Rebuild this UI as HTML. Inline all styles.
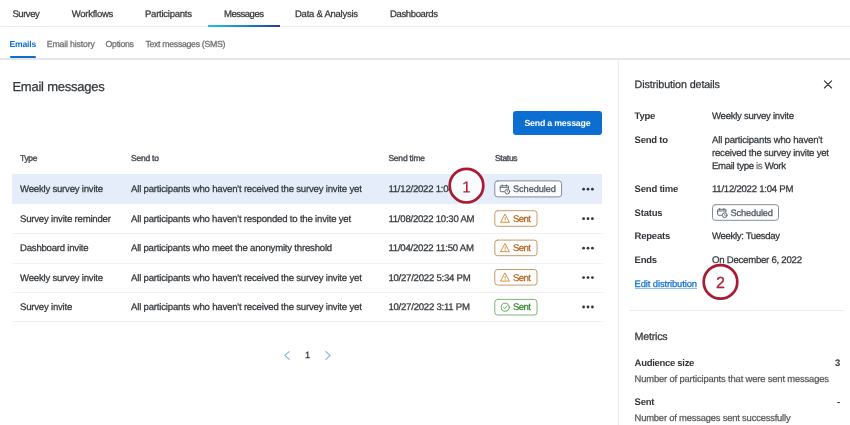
<!DOCTYPE html>
<html><head><meta charset="utf-8"><title>Email messages</title>
<style>
html,body{margin:0;padding:0;background:#fff;}
body{width:850px;height:425px;position:relative;overflow:hidden;font-family:"Liberation Sans",sans-serif;}
#app{position:absolute;left:0;top:0;width:850px;height:425px;overflow:hidden;background:#fff;will-change:transform;text-rendering:geometricPrecision;}
.t{position:absolute;white-space:pre;line-height:20px;font-family:"Liberation Sans",sans-serif;-webkit-text-stroke:0.25px currentColor;}
.b{position:absolute;box-sizing:border-box;}
svg{position:absolute;overflow:visible;}
</style></head><body><div id="app">
<div class="b" style="left:0px;top:26px;width:850px;height:1px;background:#ebebeb;"></div>
<div class="b" style="left:208px;top:25px;width:72px;height:2px;background:linear-gradient(90deg,#21c3d9 0%,#1f7fc4 55%,#2a3a9c 100%);"></div>
<div class="b" style="left:0px;top:58px;width:850px;height:1.5px;background:#e6e6e6;"></div>
<div class="b" style="left:9.6px;top:56px;width:26.6px;height:2px;background:#0b6ed0;border-radius:1px"></div>
<div class="b" style="left:618px;top:59px;width:1px;height:366px;background:#ececec;"></div>
<div class="b" style="left:513px;top:111px;width:89px;height:23.5px;background:#0b6ed0;border-radius:3px"></div>
<div class="b" style="left:12px;top:174px;width:590px;height:30px;background:#e4edf9;"></div>
<div class="b" style="left:12px;top:233px;width:591px;height:1px;background:#f1f1f1;"></div>
<div class="b" style="left:12px;top:262.5px;width:591px;height:1px;background:#f1f1f1;"></div>
<div class="b" style="left:12px;top:292px;width:591px;height:1px;background:#f1f1f1;"></div>
<div class="b" style="left:12px;top:321px;width:591px;height:1px;background:#f1f1f1;"></div>
<div class="b" style="left:634.6px;top:288px;width:62.4px;height:1.4px;background:#8fbcec;"></div>
<div class="b" style="left:628.6px;top:309.5px;width:215.4px;height:1px;background:#ebebeb;"></div>
<svg style="left:0;top:0" width="850" height="425" fill="none" stroke-linecap="round" stroke-linejoin="round">
<rect x="494.80" y="180.90" width="66.80" height="16.00" rx="2.8" fill="#fcfdfe" stroke="#838c97" stroke-width="1"/>
<rect x="494.80" y="210.70" width="42.20" height="15.60" rx="2.8" fill="#ffffff" stroke="#c99868" stroke-width="1"/>
<rect x="494.80" y="240.10" width="42.20" height="15.60" rx="2.8" fill="#ffffff" stroke="#c99868" stroke-width="1"/>
<rect x="494.80" y="269.50" width="42.20" height="15.60" rx="2.8" fill="#ffffff" stroke="#c99868" stroke-width="1"/>
<rect x="494.80" y="299.40" width="42.20" height="15.60" rx="2.8" fill="#ffffff" stroke="#7ab775" stroke-width="1"/>
<rect x="712.50" y="204.70" width="66.00" height="15.60" rx="2.8" fill="#ffffff" stroke="#838c97" stroke-width="1"/>
<g transform="translate(499.9,184.5)" stroke="#56606b" stroke-width="0.9"><path d="M4.2 7.2H1.2a.9 .9 0 0 1-.9-.9V2.1a.9 .9 0 0 1 .9-.9h6.6a.9 .9 0 0 1 .9 .9V4"/><path d="M.4 2.9h8.2"/><path d="M2.3 .4v1.4M6.6 .4v1.4"/><circle cx="7.4" cy="7.1" r="2.4"/><path d="M7.4 5.9v1.3l.8 .5" stroke-width="0.7"/></g>
<g transform="translate(717.3,208.1)" stroke="#56606b" stroke-width="0.9"><path d="M4.2 7.2H1.2a.9 .9 0 0 1-.9-.9V2.1a.9 .9 0 0 1 .9-.9h6.6a.9 .9 0 0 1 .9 .9V4"/><path d="M.4 2.9h8.2"/><path d="M2.3 .4v1.4M6.6 .4v1.4"/><circle cx="7.4" cy="7.1" r="2.4"/><path d="M7.4 5.9v1.3l.8 .5" stroke-width="0.7"/></g>
<g transform="translate(500.5,213.8)" stroke="#cf7f2c" stroke-width="0.85"><path d="M4.65 .6L8.9 8.5H.4Z"/><path d="M4.65 3.6v2.3M4.65 7.1v.1" stroke-width="0.8"/></g>
<g transform="translate(500.5,243.2)" stroke="#cf7f2c" stroke-width="0.85"><path d="M4.65 .6L8.9 8.5H.4Z"/><path d="M4.65 3.6v2.3M4.65 7.1v.1" stroke-width="0.8"/></g>
<g transform="translate(500.5,272.6)" stroke="#cf7f2c" stroke-width="0.85"><path d="M4.65 .6L8.9 8.5H.4Z"/><path d="M4.65 3.6v2.3M4.65 7.1v.1" stroke-width="0.8"/></g>
<g transform="translate(501.1,302.9)" stroke="#4a9a45" stroke-width="0.85"><circle cx="4.2" cy="4.3" r="4.05"/><path d="M2.4 4.5l1.3 1.3 2.3-2.7"/></g>
<circle cx="583.6" cy="189.2" r="1.4" fill="#32363a" stroke="none"/>
<circle cx="588.0" cy="189.2" r="1.4" fill="#32363a" stroke="none"/>
<circle cx="592.4" cy="189.2" r="1.4" fill="#32363a" stroke="none"/>
<circle cx="583.6" cy="218.7" r="1.4" fill="#32363a" stroke="none"/>
<circle cx="588.0" cy="218.7" r="1.4" fill="#32363a" stroke="none"/>
<circle cx="592.4" cy="218.7" r="1.4" fill="#32363a" stroke="none"/>
<circle cx="583.6" cy="248.2" r="1.4" fill="#32363a" stroke="none"/>
<circle cx="588.0" cy="248.2" r="1.4" fill="#32363a" stroke="none"/>
<circle cx="592.4" cy="248.2" r="1.4" fill="#32363a" stroke="none"/>
<circle cx="583.6" cy="277.6" r="1.4" fill="#32363a" stroke="none"/>
<circle cx="588.0" cy="277.6" r="1.4" fill="#32363a" stroke="none"/>
<circle cx="592.4" cy="277.6" r="1.4" fill="#32363a" stroke="none"/>
<circle cx="583.6" cy="307.0" r="1.4" fill="#32363a" stroke="none"/>
<circle cx="588.0" cy="307.0" r="1.4" fill="#32363a" stroke="none"/>
<circle cx="592.4" cy="307.0" r="1.4" fill="#32363a" stroke="none"/>
<path d="M289.2 351.6L284.8 355.4l4.4 4" stroke="#82b1e6" stroke-width="1.2"/>
<path d="M325.8 351.6l4.4 3.8-4.4 4" stroke="#82b1e6" stroke-width="1.2"/>
<path d="M824.4 80.8l7.2 7.2M831.6 80.8l-7.2 7.2" stroke="#32363a" stroke-width="1.1"/>
</svg>

<div class="t" style="left:12.4px;top:5px;font-size:9.5px;color:#32363a;letter-spacing:-0.436px;">Survey</div>
<div class="t" style="left:71.8px;top:5px;font-size:9.5px;color:#32363a;letter-spacing:-0.268px;">Workflows</div>
<div class="t" style="left:145px;top:5px;font-size:9.5px;color:#32363a;letter-spacing:-0.24px;">Participants</div>
<div class="t" style="left:224px;top:5px;font-size:9.5px;color:#32363a;letter-spacing:-0.473px;">Messages</div>
<div class="t" style="left:295px;top:5px;font-size:9.5px;color:#32363a;letter-spacing:-0.253px;">Data &amp; Analysis</div>
<div class="t" style="left:390px;top:5px;font-size:9.5px;color:#32363a;letter-spacing:-0.359px;">Dashboards</div>
<div class="t" style="left:9.6px;top:34px;font-size:8.6px;font-weight:700;-webkit-text-stroke:0;color:#0b6ed0;letter-spacing:-0.224px;">Emails</div>
<div class="t" style="left:46.8px;top:34px;font-size:8.8px;color:#6a6d70;letter-spacing:-0.197px;">Email history</div>
<div class="t" style="left:105.6px;top:34px;font-size:8.8px;color:#6a6d70;letter-spacing:-0.321px;">Options</div>
<div class="t" style="left:145.4px;top:34px;font-size:8.8px;color:#6a6d70;letter-spacing:-0.336px;">Text messages (SMS)</div>
<div class="t" style="left:12.4px;top:77px;font-size:13px;color:#32363a;letter-spacing:-0.229px;">Email messages</div>
<div class="t" style="left:524.4px;top:113px;font-size:8.8px;font-weight:700;-webkit-text-stroke:0;color:#ffffff;letter-spacing:-0.212px;">Send a message</div>
<div class="t" style="left:20px;top:148px;font-size:8.5px;-webkit-text-stroke:0.4px currentColor;color:#4b4f54;letter-spacing:-0.346px;">Type</div>
<div class="t" style="left:131px;top:148px;font-size:8.5px;-webkit-text-stroke:0.4px currentColor;color:#4b4f54;letter-spacing:-0.219px;">Send to</div>
<div class="t" style="left:388.4px;top:148px;font-size:8.5px;-webkit-text-stroke:0.4px currentColor;color:#4b4f54;letter-spacing:-0.21px;">Send time</div>
<div class="t" style="left:495px;top:148px;font-size:8.5px;-webkit-text-stroke:0.4px currentColor;color:#4b4f54;letter-spacing:-0.302px;">Status</div>
<div class="t" style="left:20px;top:180px;font-size:9.6px;color:#32363a;letter-spacing:-0.218px;">Weekly survey invite</div>
<div class="t" style="left:131px;top:180px;font-size:9.6px;color:#32363a;letter-spacing:-0.198px;">All participants who haven't received the survey invite yet</div>
<div class="t" style="left:388.4px;top:180px;font-size:9.6px;color:#32363a;letter-spacing:-0.239px;">11/12/2022 1:04 PM</div>
<div class="t" style="left:20px;top:210px;font-size:9.6px;color:#32363a;letter-spacing:-0.216px;">Survey invite reminder</div>
<div class="t" style="left:131px;top:210px;font-size:9.6px;color:#32363a;letter-spacing:-0.2px;">All participants who haven't responded to the invite yet</div>
<div class="t" style="left:388.4px;top:210px;font-size:9.6px;color:#32363a;letter-spacing:-0.239px;">11/08/2022 10:30 AM</div>
<div class="t" style="left:20px;top:239px;font-size:9.6px;color:#32363a;letter-spacing:-0.228px;">Dashboard invite</div>
<div class="t" style="left:131px;top:239px;font-size:9.6px;color:#32363a;letter-spacing:-0.209px;">All participants who meet the anonymity threshold</div>
<div class="t" style="left:388.4px;top:239px;font-size:9.6px;color:#32363a;letter-spacing:-0.237px;">11/04/2022 11:50 AM</div>
<div class="t" style="left:20px;top:269px;font-size:9.6px;color:#32363a;letter-spacing:-0.218px;">Weekly survey invite</div>
<div class="t" style="left:131px;top:269px;font-size:9.6px;color:#32363a;letter-spacing:-0.198px;">All participants who haven't received the survey invite yet</div>
<div class="t" style="left:388.4px;top:269px;font-size:9.6px;color:#32363a;letter-spacing:-0.241px;">10/27/2022 5:34 PM</div>
<div class="t" style="left:20px;top:298px;font-size:9.6px;color:#32363a;letter-spacing:-0.217px;">Survey invite</div>
<div class="t" style="left:131px;top:298px;font-size:9.6px;color:#32363a;letter-spacing:-0.198px;">All participants who haven't received the survey invite yet</div>
<div class="t" style="left:388.4px;top:298px;font-size:9.6px;color:#32363a;letter-spacing:-0.239px;">10/27/2022 3:11 PM</div>
<div class="t" style="left:513px;top:179px;font-size:9.3px;color:#4a5560;letter-spacing:-0.119px;">Scheduled</div>
<div class="t" style="left:513px;top:210px;font-size:9.6px;color:#b4641c;letter-spacing:-0.583px;">Sent</div>
<div class="t" style="left:513px;top:239px;font-size:9.6px;color:#b4641c;letter-spacing:-0.583px;">Sent</div>
<div class="t" style="left:513px;top:269px;font-size:9.6px;color:#b4641c;letter-spacing:-0.583px;">Sent</div>
<div class="t" style="left:513px;top:298px;font-size:9.6px;color:#3a8a35;letter-spacing:-0.583px;">Sent</div>
<div class="t" style="left:305px;top:345px;font-size:9.2px;color:#32363a;">1</div>
<div class="t" style="left:634.6px;top:75px;font-size:10.8px;color:#32363a;letter-spacing:-0.148px;">Distribution details</div>
<div class="t" style="left:634.6px;top:107px;font-size:9.5px;font-weight:700;-webkit-text-stroke:0;color:#32363a;letter-spacing:-0.268px;">Type</div>
<div class="t" style="left:634.6px;top:131px;font-size:9.5px;font-weight:700;-webkit-text-stroke:0;color:#32363a;letter-spacing:-0.218px;">Send to</div>
<div class="t" style="left:634.6px;top:180px;font-size:9.5px;font-weight:700;-webkit-text-stroke:0;color:#32363a;letter-spacing:-0.213px;">Send time</div>
<div class="t" style="left:634.6px;top:204px;font-size:9.5px;font-weight:700;-webkit-text-stroke:0;color:#32363a;letter-spacing:-0.218px;">Status</div>
<div class="t" style="left:634.6px;top:227px;font-size:9.5px;font-weight:700;-webkit-text-stroke:0;color:#32363a;letter-spacing:-0.231px;">Repeats</div>
<div class="t" style="left:634.6px;top:251px;font-size:9.5px;font-weight:700;-webkit-text-stroke:0;color:#32363a;letter-spacing:-0.29px;">Ends</div>
<div class="t" style="left:712px;top:107px;font-size:9.6px;color:#32363a;letter-spacing:-0.277px;">Weekly survey invite</div>
<div class="t" style="left:712px;top:131px;font-size:9.6px;color:#32363a;letter-spacing:-0.199px;">All participants who haven't</div>
<div class="t" style="left:712px;top:144px;font-size:9.6px;color:#32363a;letter-spacing:-0.232px;">received the survey invite yet</div>
<div class="t" style="left:712px;top:157px;font-size:9.6px;color:#32363a;letter-spacing:-0.31px;">Email type <span style="color:#6a6d70">is</span> Work</div>
<div class="t" style="left:712px;top:180px;font-size:9.6px;color:#32363a;letter-spacing:-0.253px;">11/12/2022 1:04 PM</div>
<div class="t" style="left:730.6px;top:203px;font-size:9.3px;color:#4a5560;letter-spacing:-0.194px;">Scheduled</div>
<div class="t" style="left:712px;top:227px;font-size:9.6px;color:#32363a;letter-spacing:-0.349px;">Weekly: Tuesday</div>
<div class="t" style="left:712px;top:251px;font-size:9.6px;color:#32363a;letter-spacing:-0.245px;">On December 6, 2022</div>
<div class="t" style="left:634.6px;top:274px;font-size:9.4px;color:#0b6ed0;letter-spacing:-0.107px;">Edit distribution</div>
<div class="t" style="left:634.6px;top:327px;font-size:10.7px;color:#32363a;letter-spacing:-0.24px;">Metrics</div>
<div class="t" style="left:634.6px;top:354px;font-size:9.5px;font-weight:700;-webkit-text-stroke:0;color:#32363a;letter-spacing:-0.297px;">Audience size</div>
<div class="t" style="left:835px;top:354px;font-size:9.5px;font-weight:700;-webkit-text-stroke:0;color:#32363a;">3</div>
<div class="t" style="left:634.6px;top:369px;font-size:9.4px;color:#55585c;letter-spacing:-0.15px;">Number of participants that were sent messages</div>
<div class="t" style="left:634.6px;top:393px;font-size:9.5px;font-weight:700;-webkit-text-stroke:0;color:#32363a;letter-spacing:-0.257px;">Sent</div>
<div class="t" style="left:837px;top:393px;font-size:9.5px;font-weight:700;-webkit-text-stroke:0;color:#32363a;">-</div>
<div class="t" style="left:634.6px;top:408px;font-size:9.4px;color:#55585c;letter-spacing:-0.188px;">Number of messages sent successfully</div>
<svg style="left:0;top:0" width="850" height="425">
<circle cx="466.5" cy="185.7" r="16.8" fill="#fafcfe" stroke="#a81c33" stroke-width="2.7"/>
<path d="M466.0 181.4h1.6v9.8h2.3v1.3h-6.5v-1.3h2.6v-8.1l-2.4 1.5-.5-1.1z" fill="#b3203a"/>
<circle cx="720.5" cy="281.9" r="16.8" fill="#ffffff" stroke="#a81c33" stroke-width="2.7"/>
</svg>
<div class="t" style="left:702.5px;top:274.46px;width:36px;text-align:center;font-size:16px;color:#b3203a;">2</div>

</div></body></html>
